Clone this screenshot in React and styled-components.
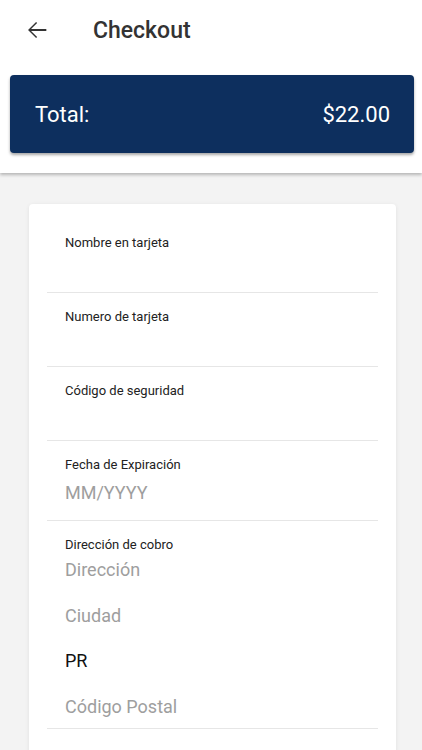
import React from "react";
import styled, { createGlobalStyle } from "styled-components";

const GlobalStyle = createGlobalStyle`
	html, body {
		margin: 0;
		padding: 0;
		background: #f3f3f3;
		font-family: Roboto, "Liberation Sans", sans-serif;
	}
	* {
		box-sizing: border-box;
	}
`;

export default function App() {
	return (
		<>
			<GlobalStyle />
			<Page>
				<Header>
					<Toolbar>
						<BackButton aria-label="back">
							<svg width="28" height="28" viewBox="0 0 24 24">
								<path
									d="M20 11.2H6.9l5.2-5.2L11.2 5.1 4.3 12l6.9 6.9.9-.9-5.2-5.2H20z"
									fill="#333"
								/>
							</svg>
						</BackButton>
						<Title>Checkout</Title>
					</Toolbar>
					<TotalBar>
						<span>Total:</span>
						<span>$22.00</span>
					</TotalBar>
				</Header>

				<Card>
					<Field $gap={2}>
						<Label>Nombre en tarjeta</Label>
						<Input type="text" />
					</Field>
					<Field $gap={2}>
						<Label>Numero de tarjeta</Label>
						<Input type="text" />
					</Field>
					<Field $gap={2}>
						<Label>Código de seguridad</Label>
						<Input type="text" />
					</Field>
					<Field $gap={8}>
						<Label>Fecha de Expiración</Label>
						<Input type="text" placeholder="MM/YYYY" />
					</Field>
					<Field $gap={5} $pb={9}>
						<Label>Dirección de cobro</Label>
						<InputStack>
							<Input type="text" placeholder="Dirección" />
							<Input type="text" placeholder="Ciudad" />
							<Input type="text" defaultValue="PR" />
							<Input type="text" placeholder="Código Postal" />
						</InputStack>
					</Field>
					<Actions />
				</Card>
			</Page>
		</>
	);
}

const Page = styled.div`
	min-height: 750px;
	background: #f3f3f3;
`;

const Header = styled.header`
	background: #fff;
	padding-bottom: 20px;
	box-shadow: 0 2px 3px rgba(0, 0, 0, 0.25);
	position: relative;
	z-index: 1;
`;

const Toolbar = styled.div`
	display: flex;
	align-items: center;
	height: 60px;
	padding-left: 23px;
`;

const BackButton = styled.button`
	display: flex;
	align-items: center;
	justify-content: center;
	width: 28px;
	height: 28px;
	padding: 0;
	border: 0;
	background: none;
	cursor: pointer;
`;

const Title = styled.h1`
	margin: 0 0 0 42px;
	font-size: 23px;
	font-weight: 500;
	color: #333;
`;

const TotalBar = styled.div`
	display: flex;
	align-items: center;
	justify-content: space-between;
	height: 78px;
	margin: 15px 8px 0 10px;
	padding: 0 24px 0 25px;
	background: #0d2f5e;
	border-radius: 4px;
	box-shadow: 0 2px 3px rgba(0, 0, 0, 0.35);
	color: #fff;
	font-size: 22px;
`;

const Card = styled.div`
	margin: 31px 26px 0 29px;
	padding: 15px 18px 0;
	background: #fff;
	border-radius: 4px;
	box-shadow: 0 1px 4px rgba(0, 0, 0, 0.08);
`;

const Field = styled.div`
	display: flex;
	flex-direction: column;
	padding: 16px 18px ${({ $pb }) => $pb ?? 15}px;
	border-bottom: 1px solid #e6e6e6;

	& > input,
	& > div {
		margin-top: ${({ $gap }) => $gap}px;
	}
`;

const Label = styled.label`
	font-size: 13px;
	line-height: 16px;
	color: #222;
`;

const InputStack = styled.div`
	display: flex;
	flex-direction: column;
	gap: 21.5px;
`;

const Input = styled.input`
	height: 24px;
	padding: 0;
	border: 0;
	outline: none;
	font-family: Roboto, "Liberation Sans", sans-serif;
	font-size: 18px;
	line-height: 24px;
	color: #111;
	background: transparent;

	&::placeholder {
		color: #9e9e9e;
	}
`;

const Actions = styled.div`
	height: 80px;
`;
